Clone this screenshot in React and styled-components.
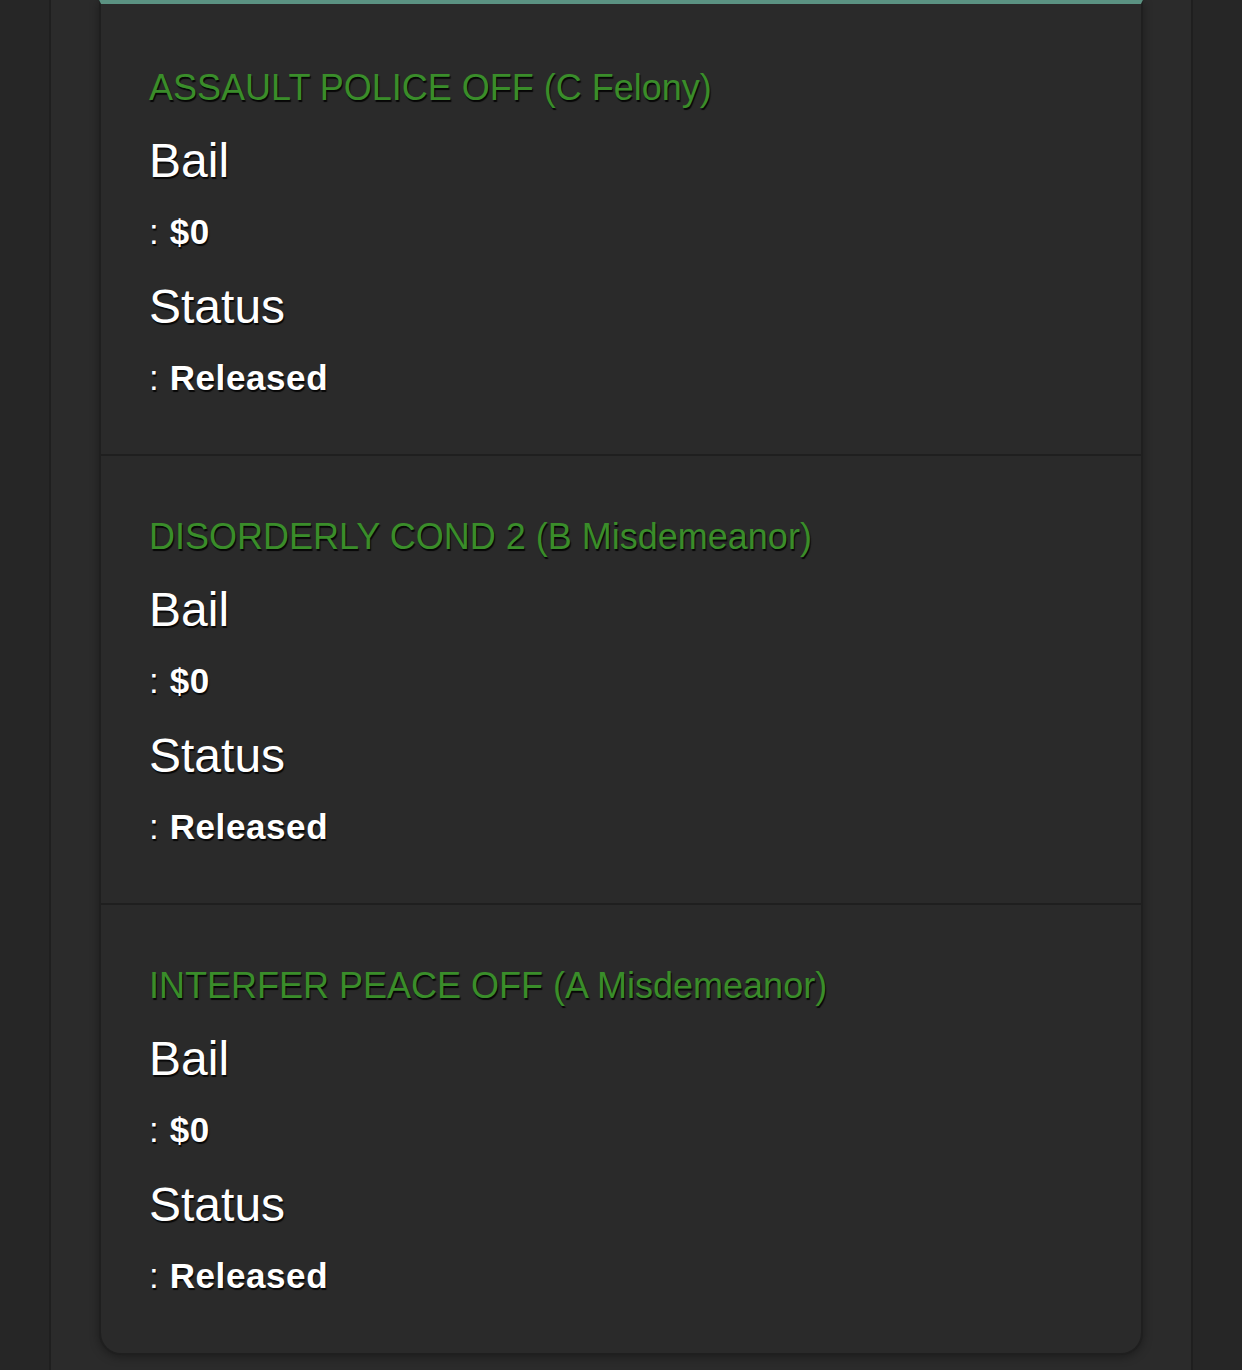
import styled, { createGlobalStyle } from "styled-components";

const GlobalStyle = createGlobalStyle`
  html, body {
    margin: 0;
    padding: 0;
    background: #262626;
  }
  body {
    font-family: "Liberation Sans", Arial, sans-serif;
  }
`;

const charges = [
  { name: "ASSAULT POLICE OFF", level: "C Felony", bail: "$0", status: "Released" },
  { name: "DISORDERLY COND 2", level: "B Misdemeanor", bail: "$0", status: "Released" },
  { name: "INTERFER PEACE OFF", level: "A Misdemeanor", bail: "$0", status: "Released" },
];

const App = () => {
  return (
    <Page>
      <GlobalStyle />
      <Column>
        <Card>
          {charges.map((c, i) => (
            <Charge key={i}>
              <Title>
                {c.name} ({c.level})
              </Title>
              <Label>Bail</Label>
              <Value>
                : <b>{c.bail}</b>
              </Value>
              <Label>Status</Label>
              <Value>
                : <b>{c.status}</b>
              </Value>
            </Charge>
          ))}
        </Card>
      </Column>
    </Page>
  );
};

export default App;

const Page = styled.div`
  min-height: 1370px;
  background: #262626;
  padding: 0 49px;
  box-sizing: border-box;
`;

const Column = styled.div`
  background: #2b2b2b;
  border-left: 2px solid #1f1f1f;
  border-right: 2px solid #1f1f1f;
  min-height: 1370px;
  padding: 0 48px 16px;
  box-sizing: border-box;
`;

const Card = styled.section`
  background: #2a2a2a;
  border-top: 4px solid #5b9282;
  border-left: 2px solid #1f1f1f;
  border-right: 2px solid #1f1f1f;
  border-bottom: 2px solid #1f1f1f;
  border-radius: 0 0 22px 22px;
  box-shadow: 0 2px 10px rgba(0, 0, 0, 0.35);
`;

const Charge = styled.div`
  padding: 59px 48px 58px;
  border-bottom: 2px solid #1f1f1f;
  display: flex;
  flex-direction: column;
  color: #fff;
  text-shadow: 1px 2px 1px rgba(0, 0, 0, 0.85);

  &:first-child {
    padding-top: 62px;
  }
  &:last-child {
    border-bottom: none;
    padding-bottom: 59px;
  }
`;

const Title = styled.div`
  color: #3a8d2a;
  font-size: 36px;
  line-height: 44px;
  margin-bottom: 23px;
`;

const Label = styled.div`
  font-size: 48px;
  line-height: 56px;
  margin-bottom: 25px;
`;

const Value = styled.div`
  font-size: 35px;
  line-height: 36px;
  letter-spacing: 0.6px;
  margin-bottom: 29px;

  &:last-child {
    margin-bottom: 0;
  }

  b {
    font-weight: 700;
  }
`;
